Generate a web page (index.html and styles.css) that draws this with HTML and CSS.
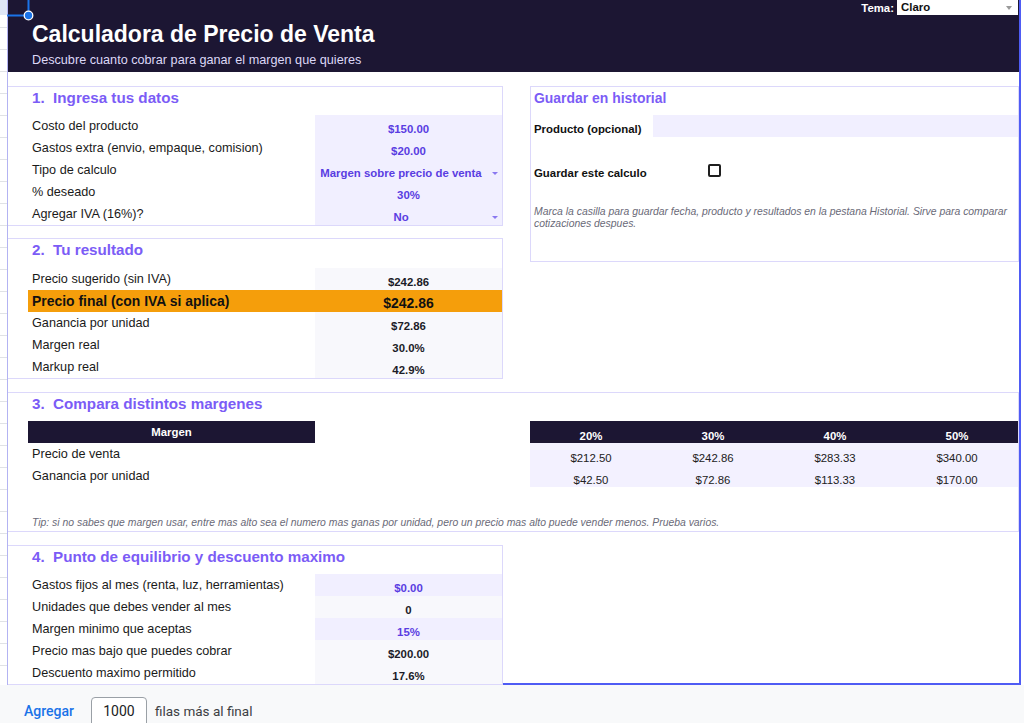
FILE: index.html
```html
<!DOCTYPE html>
<html lang="es">
<head>
<meta charset="utf-8">
<title>Calculadora de Precio de Venta</title>
<link rel="stylesheet" href="styles.css">
</head>
<body>
<div class="app">
  <div class="main">
    <div class="gutter"></div>
    <div class="canvas">
      <header class="hero">
        <div class="theme">
          <span class="theme-label">Tema:</span>
          <div class="theme-select"><span>Claro</span><span class="theme-caret"></span></div>
        </div>
        <h1>Calculadora de Precio de Venta</h1>
        <p>Descubre cuanto cobrar para ganar el margen que quieres</p>
      </header>

      <div class="top">
        <div class="leftcol">
          <section class="box s1">
            <div class="title">1.  Ingresa tus datos</div>
            <div class="grid3">
              <div class="lbl">Costo del producto</div><div class="val in">$150.00</div>
              <div class="lbl">Gastos extra (envio, empaque, comision)</div><div class="val in">$20.00</div>
              <div class="lbl">Tipo de calculo</div><div class="val in dd"><span class="vtxt">Margen sobre precio de venta</span><span class="caret"></span></div>
              <div class="lbl">% deseado</div><div class="val in">30%</div>
              <div class="lbl">Agregar IVA (16%)?</div><div class="val in dd"><span class="vtxt">No</span><span class="caret"></span></div>
            </div>
          </section>

          <section class="box s2">
            <div class="title t29">2.  Tu resultado</div>
            <div class="grid3">
              <div class="lbl">Precio sugerido (sin IVA)</div><div class="val out">$242.86</div>
              <div class="lbl hl">Precio final (con IVA si aplica)</div><div class="val hl">$242.86</div>
              <div class="lbl">Ganancia por unidad</div><div class="val out">$72.86</div>
              <div class="lbl">Margen real</div><div class="val out">30.0%</div>
              <div class="lbl">Markup real</div><div class="val out">42.9%</div>
            </div>
          </section>
        </div>

        <section class="box hist">
          <div class="title">Guardar en historial</div>
          <div class="hgrid">
            <div class="hlbl">Producto (opcional)</div><div class="hinput"></div>
            <div class="hempty"></div>
            <div class="hlbl">Guardar este calculo</div><div class="hcheck"><span class="checkbox"></span></div>
            <div class="hempty"></div>
            <div class="note">Marca la casilla para guardar fecha, producto y resultados en la pestana Historial. Sirve para comparar cotizaciones despues.</div>
          </div>
        </section>
      </div>

      <section class="box s3">
        <div class="title">3.  Compara distintos margenes</div>
        <div class="g8">
          <div class="th-left">Margen</div>
          <div class="th c5">20%</div><div class="th">30%</div><div class="th">40%</div><div class="th">50%</div>
          <div class="lbl">Precio de venta</div>
          <div class="cv c5">$212.50</div><div class="cv">$242.86</div><div class="cv">$283.33</div><div class="cv">$340.00</div>
          <div class="lbl">Ganancia por unidad</div>
          <div class="cv c5">$42.50</div><div class="cv">$72.86</div><div class="cv">$113.33</div><div class="cv">$170.00</div>
          <div class="spacer"></div>
          <div class="tip">Tip: si no sabes que margen usar, entre mas alto sea el numero mas ganas por unidad, pero un precio mas alto puede vender menos. Prueba varios.</div>
        </div>
      </section>

      <div class="bottom">
        <section class="box s4">
          <div class="title">4.  Punto de equilibrio y descuento maximo</div>
          <div class="grid3">
            <div class="lbl">Gastos fijos al mes (renta, luz, herramientas)</div><div class="val in">$0.00</div>
            <div class="lbl">Unidades que debes vender al mes</div><div class="val out">0</div>
            <div class="lbl">Margen minimo que aceptas</div><div class="val in">15%</div>
            <div class="lbl">Precio mas bajo que puedes cobrar</div><div class="val out">$200.00</div>
            <div class="lbl">Descuento maximo permitido</div><div class="val out">17.6%</div>
          </div>
        </section>
        <div class="filler"></div>
      </div>
    </div>
    <div class="edge"></div>
  </div>

  <footer class="addbar">
    <span class="add-link">Agregar</span>
    <span class="add-input">1000</span>
    <span class="add-text">filas más al final</span>
  </footer>

  <svg class="handle" width="40" height="24" viewBox="0 0 40 24" aria-hidden="true">
    <line x1="7" y1="15.5" x2="28" y2="15.5" stroke="#1a73e8" stroke-width="2"/>
    <line x1="28.5" y1="0" x2="28.5" y2="15" stroke="#1a73e8" stroke-width="2"/>
    <circle cx="28.5" cy="15.5" r="4.3" fill="#1a73e8" stroke="#ffffff" stroke-width="1.3"/>
  </svg>
</div>
</body>
</html>
```
FILE: styles.css
```css
* { box-sizing: border-box; }
html, body { margin: 0; padding: 0; }
body {
  background: #ffffff;
  font-family: "Liberation Sans", Arial, sans-serif;
  color: #1f1f1f;
}

.app {
  position: relative;
  width: 1024px;
  height: 723px;
  overflow: hidden;
  display: flex;
  flex-direction: column;
}

.main {
  display: flex;
  height: 685px;
  flex: none;
}

.gutter {
  width: 7px;
  flex: none;
  background:
    linear-gradient(#dfe6f6, #dfe6f6) 0 0 / 7px 15px no-repeat,
    repeating-linear-gradient(to bottom, transparent 0 21px, #e0e2e6 21px 22px) 0 6px;
}

.canvas {
  width: 1014px;
  flex: none;
  border-left: 1px solid #b3b3f2;
  border-right: 2px solid #4f5cf4;
  display: flex;
  flex-direction: column;
}

.edge { flex: 1; }

/* Header */
.hero {
  height: 72px;
  flex: none;
  background: #1c1633;
  color: #ffffff;
  padding: 0 1px 0 24px;
}
.theme {
  display: flex;
  justify-content: flex-end;
  align-items: center;
  height: 15px;
}
.theme-label {
  font-weight: 700;
  font-size: 11.4px;
  margin-right: 3px;
}
.theme-select {
  width: 121px;
  height: 15px;
  background: #ffffff;
  color: #111111;
  font-weight: 700;
  font-size: 11.4px;
  line-height: 15px;
  padding: 0 6px 0 4px;
  display: flex;
  justify-content: space-between;
  align-items: center;
}
.theme-caret {
  width: 0;
  height: 0;
  border-left: 3.5px solid transparent;
  border-right: 3.5px solid transparent;
  border-top: 4px solid #9a9a9a;
}
.hero h1 {
  margin: 6px 0 0;
  font-size: 23px;
  line-height: 26px;
  font-weight: 700;
}
.hero p {
  margin: 5.8px 0 0;
  font-size: 12.67px;
  line-height: 15px;
  color: #ddd8f7;
}

/* Boxes */
.box {
  border: 1px solid #dcd8fb;
  border-left: none;
  background: #ffffff;
}
.title {
  height: 28px;
  padding: 2px 0 0 24px;
  font-size: 15.2px;
  line-height: 18px;
  font-weight: 700;
  color: #7b5cf6;
  white-space: pre;
}
.title.t29 { height: 29px; }

.top {
  display: flex;
  align-items: flex-start;
  margin-top: 14px;
}
.leftcol { width: 495px; flex: none; }
.s2 { margin-top: 12px; }

.grid3 {
  display: grid;
  grid-template-columns: 20px 287px 187px;
  grid-auto-rows: 22px;
}
.lbl {
  grid-column: 2;
  padding-left: 4px;
  display: flex;
  align-items: center;
  font-size: 12.67px;
  white-space: nowrap;
  color: #1a1a1a;
}
.val {
  grid-column: 3;
  display: flex;
  align-items: flex-end;
  justify-content: center;
  font-size: 11.4px;
  font-weight: 700;
  line-height: 14px;
  padding-bottom: 1px;
  white-space: nowrap;
}
.val.in { background: #f1efff; color: #5a3de2; }
.val.out { background: #f8f8fc; color: #1c1c28; }
.val.dd { padding-right: 4px; }
.dd .vtxt { flex: 1; text-align: center; }
.caret {
  width: 0;
  height: 0;
  border-left: 3px solid transparent;
  border-right: 3px solid transparent;
  border-top: 3.5px solid #8a78f0;
  margin: 0 0 5px 5px;
}
.hl {
  background: #f59e0b;
  color: #111111;
  font-weight: 700;
  font-size: 13.93px;
}
.val.hl { line-height: 16px; }

/* History box */
.hist {
  width: 489px;
  height: 176px;
  flex: none;
  margin-left: 27px;
  border-left: 1px solid #dcd8fb;
}
.hist .title {
  padding-left: 3px;
  font-size: 13.93px;
}
.hgrid {
  display: grid;
  grid-template-columns: 122px 365px;
  grid-auto-rows: 22px;
}
.hlbl {
  font-weight: 700;
  font-size: 11.4px;
  line-height: 14px;
  padding: 0 0 1.5px 3px;
  display: flex;
  align-items: flex-end;
  color: #111111;
  white-space: nowrap;
}
.hinput { background: #f1efff; }
.hempty { grid-column: 1 / -1; }
.hcheck {
  display: flex;
  justify-content: flex-start;
  align-items: center;
  padding-left: 55px;
  padding-top: 1px;
}
.checkbox {
  width: 13px;
  height: 13px;
  border: 2px solid #1f1f1f;
  border-radius: 2px;
}
.note {
  grid-column: 1 / -1;
  padding: 2.5px 3px 0;
  font-size: 10.4px;
  line-height: 12px;
  font-style: italic;
  color: #6a6a78;
}

/* Section 3 */
.s3 {
  margin-top: 13px;
  height: 140px;
  flex: none;
}
.g8 {
  display: grid;
  grid-template-columns: 20px 287px 187px 28px repeat(4, 122px);
  grid-auto-rows: 22px;
}
.th-left {
  grid-column: 2;
  background: #1c1633;
  color: #ffffff;
  font-weight: 700;
  font-size: 11.4px;
  display: flex;
  align-items: center;
  justify-content: center;
}
.th {
  background: #1c1633;
  color: #ffffff;
  font-weight: 700;
  font-size: 11.4px;
  line-height: 14px;
  display: flex;
  align-items: flex-end;
  justify-content: center;
}
.c5 { grid-column: 5; }
.cv {
  background: #f3f1ff;
  color: #222222;
  font-size: 11.4px;
  line-height: 14px;
  display: flex;
  align-items: flex-end;
  justify-content: center;
}
.spacer { grid-column: 1 / -1; }
.tip {
  grid-column: 2 / -1;
  padding: 0 0 2.5px 4px;
  font-size: 10.4px;
  line-height: 12px;
  font-style: italic;
  color: #6a6a78;
  white-space: nowrap;
  display: flex;
  align-items: flex-end;
}

/* Section 4 */
.bottom {
  display: flex;
  margin-top: 13px;
  height: 140px;
  flex: none;
}
.s4 { width: 495px; flex: none; }
.filler {
  flex: 1;
  border-bottom: 2px solid #4f5cf4;
}

/* Footer add rows bar */
.addbar {
  flex: 1;
  background: #f8f9fa;
  display: flex;
  align-items: flex-start;
  padding-left: 24px;
  font-family: Roboto, "Liberation Sans", Arial, sans-serif;
}
.add-link {
  margin-top: 17.5px;
  font-size: 14px;
  line-height: 16px;
  font-weight: 500;
  color: #1a73e8;
}
.add-input {
  margin: 12px 0 0 17px;
  width: 56px;
  height: 32px;
  border: 1px solid #9aa0a6;
  border-radius: 4px;
  background: #ffffff;
  padding-top: 5px;
  font-size: 14px;
  line-height: 16px;
  text-align: center;
  color: #202124;
}
.add-text {
  margin: 18px 0 0 8px;
  font-size: 13.5px;
  line-height: 16px;
  color: #3c4043;
}

.handle {
  position: absolute;
  left: 0;
  top: 0;
  pointer-events: none;
}
```
